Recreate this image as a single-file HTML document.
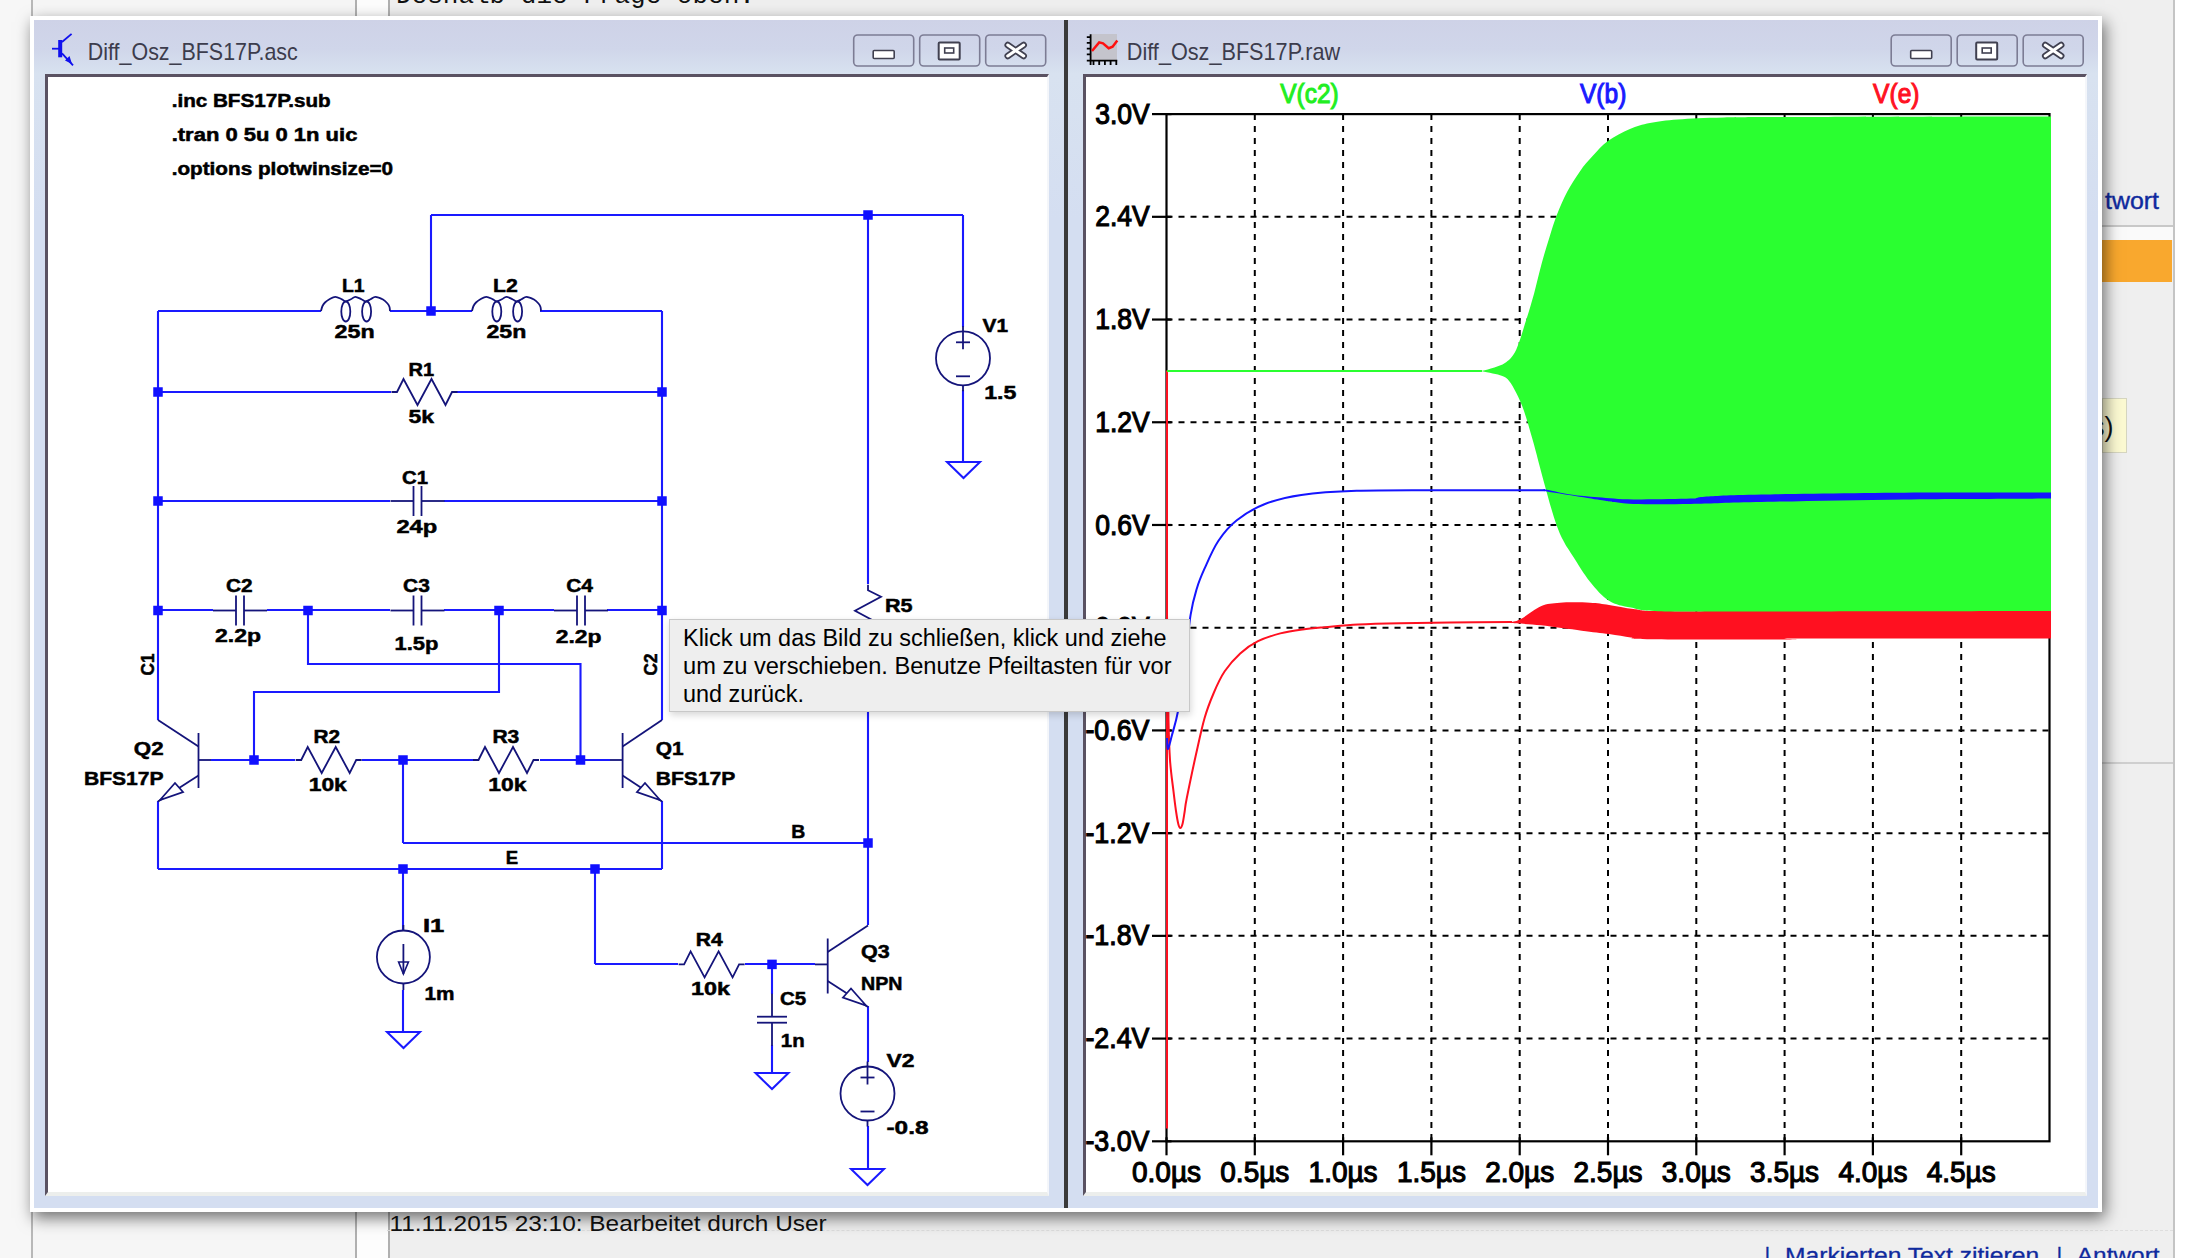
<!DOCTYPE html>
<html><head><meta charset="utf-8"><style>
html,body{margin:0;padding:0}
body{width:2202px;height:1258px;overflow:hidden;position:relative;background:#efefef;font-family:"Liberation Sans",sans-serif}
.a{position:absolute}
</style></head><body>
<div class="a" style="left:0;top:0;width:31px;height:1258px;background:#f7f7f7"></div>
<div class="a" style="left:31px;top:0;width:324px;height:1258px;background:#f6f6f6;border-left:2px solid #b8b8b8"></div>
<div class="a" style="left:355px;top:0;width:31px;height:1258px;background:#fdfdfd;border-left:2px solid #b0b0b0;border-right:2px solid #b0b0b0"></div>
<div class="a" style="left:2173px;top:0;width:29px;height:1258px;background:#ffffff;border-left:2px solid #c4c4c4"></div>
<div class="a" style="left:396px;top:-19px;font-family:'Liberation Mono',monospace;font-size:26px;color:#111;white-space:nowrap">Deshalb die Frage oben.</div>
<div class="a" style="left:2080px;top:225px;width:93px;height:13px;background:#fafafa;border-top:2px solid #c8c8c8"></div>
<div class="a" style="left:2080px;top:240px;width:92px;height:42px;background:#f9a82e"></div>
<div class="a" style="left:2102px;top:398px;width:23px;height:53px;background:#fcfad2;border:1px solid #d6d6c0"></div>
<div class="a" style="left:2102px;top:762px;width:71px;height:2px;background:#cfcfcf"></div>
<div class="a" style="left:387px;top:1230px;width:1786px;height:1px;border-top:1px dashed #dedede"></div>
<svg class="a" style="left:0;top:0" width="2202" height="1258" viewBox="0 0 2202 1258" font-family="Liberation Sans">
<text x="2105" y="209.3" font-size="23" fill="#0f2a9e" stroke="#0f2a9e" stroke-width="0.4" textLength="54" lengthAdjust="spacingAndGlyphs">twort</text>
<text x="2091" y="436" font-size="27" fill="#111">s)</text>
<text x="389.4" y="1230.6" font-size="21.5" fill="#111" textLength="437.3" lengthAdjust="spacingAndGlyphs">11.11.2015 23:10: Bearbeitet durch User</text>
<text x="1764.5" y="1263" font-size="22" fill="#0f2a9e" stroke="#0f2a9e" stroke-width="0.3">|</text>
<text x="1785.1" y="1263" font-size="22" fill="#0f2a9e" stroke="#0f2a9e" stroke-width="0.3" textLength="254" lengthAdjust="spacingAndGlyphs">Markierten Text zitieren</text>
<text x="2056.5" y="1263" font-size="22" fill="#0f2a9e" stroke="#0f2a9e" stroke-width="0.3">|</text>
<text x="2076.8" y="1263" font-size="22" fill="#0f2a9e" stroke="#0f2a9e" stroke-width="0.3" textLength="82.8" lengthAdjust="spacingAndGlyphs">Antwort</text>
</svg>
<!-- window -->
<div class="a" style="left:30px;top:16px;width:2072px;height:1196px;background:#fff;box-shadow:3px 6px 15px rgba(0,0,0,0.55)"></div>
<div class="a" style="left:34px;top:20px;width:2064px;height:1188px;background:linear-gradient(#ced2e7 0px,#d0d6ea 30px,#d8e2f0 54px,#d4def1 200px)"></div>
<div class="a" style="left:1064px;top:20px;width:4px;height:1188px;background:#3a3a3a"></div>
<div class="a" style="left:45px;top:74px;width:1004px;height:1122px;background:#fff;border-left:3px solid #5a5262;border-top:3px solid #5a5262;border-right:2px solid #f4f6fa;border-bottom:4px solid #eceeec;box-sizing:border-box"></div>
<div class="a" style="left:1083px;top:74px;width:1004px;height:1122px;background:#fff;border-left:3px solid #5a5262;border-top:3px solid #5a5262;border-right:2px solid #f4f6fa;border-bottom:4px solid #eceeec;box-sizing:border-box"></div>
<svg class="a" style="left:0;top:0" width="2202" height="1258" viewBox="0 0 2202 1258" font-family="Liberation Sans">
<text x="87.8" y="59.8" font-size="24" fill="#3c3c4c" textLength="210" lengthAdjust="spacingAndGlyphs">Diff_Osz_BFS17P.asc</text>
<text x="1126.8" y="59.6" font-size="24" fill="#3c3c4c" textLength="213.4" lengthAdjust="spacingAndGlyphs">Diff_Osz_BFS17P.raw</text>
<g id="buttons"><rect x="853.7" y="35" width="60" height="31" rx="4" fill="none" stroke="#7c7c94" stroke-width="1.6"/><rect x="919.7" y="35" width="60" height="31" rx="4" fill="none" stroke="#7c7c94" stroke-width="1.6"/><rect x="985.7" y="35" width="60" height="31" rx="4" fill="none" stroke="#7c7c94" stroke-width="1.6"/><rect x="873.2" y="50.5" width="21" height="8" fill="#fff" stroke="#404050" stroke-width="1.6" rx="1"/><rect x="938.7" y="42.5" width="21" height="17" fill="#fff" stroke="#404050" stroke-width="2" rx="1"/><rect x="944.7" y="48" width="9" height="5" fill="none" stroke="#404050" stroke-width="1.6"/><path d="M1007.7,45 L1023.7,56 M1023.7,45 L1007.7,56" stroke="#404050" stroke-width="6.5" stroke-linecap="round"/><path d="M1007.7,45 L1023.7,56 M1023.7,45 L1007.7,56" stroke="#fff" stroke-width="3" stroke-linecap="round"/><rect x="1891.2" y="35" width="60" height="31" rx="4" fill="none" stroke="#7c7c94" stroke-width="1.6"/><rect x="1957.2" y="35" width="60" height="31" rx="4" fill="none" stroke="#7c7c94" stroke-width="1.6"/><rect x="2023.2" y="35" width="60" height="31" rx="4" fill="none" stroke="#7c7c94" stroke-width="1.6"/><rect x="1910.7" y="50.5" width="21" height="8" fill="#fff" stroke="#404050" stroke-width="1.6" rx="1"/><rect x="1976.2" y="42.5" width="21" height="17" fill="#fff" stroke="#404050" stroke-width="2" rx="1"/><rect x="1982.2" y="48" width="9" height="5" fill="none" stroke="#404050" stroke-width="1.6"/><path d="M2045.1999999999998,45 L2061.2,56 M2061.2,45 L2045.1999999999998,56" stroke="#404050" stroke-width="6.5" stroke-linecap="round"/><path d="M2045.1999999999998,45 L2061.2,56 M2061.2,45 L2045.1999999999998,56" stroke="#fff" stroke-width="3" stroke-linecap="round"/><line x1="52" y1="48.7" x2="59" y2="48.7" stroke="#1010ee" stroke-width="1.8"/><rect x="58.2" y="40" width="4" height="17.3" fill="#1010ee"/><line x1="62" y1="42" x2="71.6" y2="33.9" stroke="#1010ee" stroke-width="1.8"/><line x1="62" y1="53.4" x2="73" y2="65.4" stroke="#1010ee" stroke-width="1.8"/><polygon points="72,64 65,60.5 69.5,56" fill="#1010ee"/><rect x="1091" y="34" width="26" height="26" fill="#c4c4cc"/><path d="M1090.6,34.3 L1090.6,64.9 M1086.8,60.6 L1117.3,60.6 M1086.8,37.2 L1090.6,37.2 M1086.8,42.9 L1090.6,42.9 M1086.8,48.6 L1090.6,48.6 M1086.8,54.4 L1090.6,54.4 M1093.5,60.6 L1093.5,64.9 M1099.2,60.6 L1099.2,64.9 M1104.9,60.6 L1104.9,64.9 M1110.6,60.6 L1110.6,64.9 M1116.3,60.6 L1116.3,64.9" stroke="#000" stroke-width="1.8" fill="none"/><path d="M1092,51 L1099.2,42.4 L1103,43.4 L1108.7,48.2 L1112.6,46.7 L1117.3,40.5" stroke="#ff1010" stroke-width="2.5" fill="none"/></g>
<g id="schem"><line x1="431" y1="215" x2="963" y2="215" stroke="#1a1aff" stroke-width="2.1" /><line x1="431" y1="215" x2="431" y2="311" stroke="#1a1aff" stroke-width="2.1" /><line x1="158" y1="311" x2="321" y2="311" stroke="#1a1aff" stroke-width="2.1" /><line x1="390" y1="311" x2="472" y2="311" stroke="#1a1aff" stroke-width="2.1" /><line x1="540" y1="311" x2="662" y2="311" stroke="#1a1aff" stroke-width="2.1" /><line x1="158" y1="311" x2="158" y2="720" stroke="#1a1aff" stroke-width="2.1" /><line x1="662" y1="311" x2="662" y2="720" stroke="#1a1aff" stroke-width="2.1" /><line x1="158" y1="392" x2="391" y2="392" stroke="#1a1aff" stroke-width="2.1" /><line x1="457" y1="392" x2="662" y2="392" stroke="#1a1aff" stroke-width="2.1" /><line x1="158" y1="501" x2="390" y2="501" stroke="#1a1aff" stroke-width="2.1" /><line x1="444" y1="501" x2="662" y2="501" stroke="#1a1aff" stroke-width="2.1" /><line x1="158" y1="610" x2="213" y2="610" stroke="#1a1aff" stroke-width="2.1" /><line x1="267" y1="610" x2="390" y2="610" stroke="#1a1aff" stroke-width="2.1" /><line x1="444" y1="610" x2="554" y2="610" stroke="#1a1aff" stroke-width="2.1" /><line x1="607" y1="610" x2="662" y2="610" stroke="#1a1aff" stroke-width="2.1" /><line x1="211" y1="760" x2="295" y2="760" stroke="#1a1aff" stroke-width="2.1" /><line x1="362" y1="760" x2="473" y2="760" stroke="#1a1aff" stroke-width="2.1" /><line x1="540" y1="760" x2="610" y2="760" stroke="#1a1aff" stroke-width="2.1" /><line x1="158" y1="801" x2="158" y2="869" stroke="#1a1aff" stroke-width="2.1" /><line x1="158" y1="869" x2="662" y2="869" stroke="#1a1aff" stroke-width="2.1" /><line x1="662" y1="801" x2="662" y2="869" stroke="#1a1aff" stroke-width="2.1" /><line x1="403" y1="760" x2="403" y2="843" stroke="#1a1aff" stroke-width="2.1" /><line x1="403" y1="843" x2="868" y2="843" stroke="#1a1aff" stroke-width="2.1" /><line x1="403" y1="869" x2="403" y2="930" stroke="#1a1aff" stroke-width="2.1" /><line x1="403" y1="990" x2="403" y2="1032" stroke="#1a1aff" stroke-width="2.1" /><line x1="595" y1="869" x2="595" y2="964" stroke="#1a1aff" stroke-width="2.1" /><line x1="595" y1="964" x2="678" y2="964" stroke="#1a1aff" stroke-width="2.1" /><line x1="745" y1="964" x2="815" y2="964" stroke="#1a1aff" stroke-width="2.1" /><line x1="772" y1="964" x2="772" y2="994" stroke="#1a1aff" stroke-width="2.1" /><line x1="772" y1="1045" x2="772" y2="1073" stroke="#1a1aff" stroke-width="2.1" /><line x1="868" y1="215" x2="868" y2="584" stroke="#1a1aff" stroke-width="2.1" /><line x1="868" y1="651" x2="868" y2="925" stroke="#1a1aff" stroke-width="2.1" /><line x1="868" y1="1006" x2="868" y2="1062" stroke="#1a1aff" stroke-width="2.1" /><line x1="868" y1="1126" x2="868" y2="1169" stroke="#1a1aff" stroke-width="2.1" /><line x1="963" y1="215" x2="963" y2="327" stroke="#1a1aff" stroke-width="2.1" /><line x1="963" y1="390" x2="963" y2="462" stroke="#1a1aff" stroke-width="2.1" /><polyline points="308.0,610.0 308.0,664.0 580.5,664.0 580.5,760.0" stroke="#1a1aff" stroke-width="2.1" fill="none" stroke-linejoin="miter"/><polyline points="499.0,610.0 499.0,692.0 254.0,692.0 254.0,760.0" stroke="#1a1aff" stroke-width="2.1" fill="none" stroke-linejoin="miter"/><path d="M321.0,311.0 C321.2,310.2 321.8,307.4 322.5,306.0 C323.2,304.6 323.9,303.6 325.0,302.5 C326.1,301.4 327.3,300.4 329.0,299.5 C330.7,298.6 333.2,296.8 335.3,296.8 C337.4,296.8 340.2,298.6 341.9,299.3 C343.6,300.1 344.1,301.3 345.6,301.3 C347.1,301.3 349.3,300.1 350.9,299.3 C352.5,298.6 353.6,296.8 355.4,296.8 C357.2,296.8 359.8,298.6 361.5,299.3 C363.2,300.1 364.1,301.3 365.6,301.3 C367.1,301.3 368.9,300.1 370.5,299.3 C372.1,298.6 373.3,296.8 375.4,296.8 C377.5,296.8 381.0,298.4 383.0,299.5 C385.0,300.6 386.4,302.2 387.5,303.5 C388.6,304.8 389.1,305.8 389.5,307.0 C389.9,308.2 389.9,310.3 390.0,311.0 " stroke="#14147a" stroke-width="1.8" fill="none"/><ellipse cx="345.8" cy="311.5" rx="4.5" ry="10" stroke="#14147a" stroke-width="1.8" fill="none"/><ellipse cx="366.6" cy="311.5" rx="4.5" ry="10" stroke="#14147a" stroke-width="1.8" fill="none"/><path d="M472.0,311.0 C472.2,310.2 472.8,307.4 473.5,306.0 C474.2,304.6 474.9,303.6 476.0,302.5 C477.1,301.4 478.3,300.4 480.0,299.5 C481.7,298.6 484.2,296.8 486.3,296.8 C488.4,296.8 491.2,298.6 492.9,299.3 C494.6,300.1 495.1,301.3 496.6,301.3 C498.1,301.3 500.3,300.1 501.9,299.3 C503.5,298.6 504.6,296.8 506.4,296.8 C508.2,296.8 510.8,298.6 512.5,299.3 C514.2,300.1 515.1,301.3 516.6,301.3 C518.1,301.3 519.9,300.1 521.5,299.3 C523.1,298.6 524.3,296.8 526.4,296.8 C528.5,296.8 532.0,298.4 534.0,299.5 C536.0,300.6 537.4,302.2 538.5,303.5 C539.6,304.8 540.1,305.8 540.5,307.0 C540.9,308.2 540.9,310.3 541.0,311.0 " stroke="#14147a" stroke-width="1.8" fill="none"/><ellipse cx="496.8" cy="311.5" rx="4.5" ry="10" stroke="#14147a" stroke-width="1.8" fill="none"/><ellipse cx="517.6" cy="311.5" rx="4.5" ry="10" stroke="#14147a" stroke-width="1.8" fill="none"/><polyline points="391.5,392.0 397.0,392.0 403.5,379.0 417.5,405.0 431.5,379.0 445.5,405.0 452.0,392.0 457.5,392.0" stroke="#14147a" stroke-width="1.8" fill="none" stroke-linejoin="miter"/><polyline points="295.7,760.0 301.2,760.0 307.7,747.0 321.7,773.0 335.7,747.0 349.7,773.0 356.2,760.0 361.7,760.0" stroke="#14147a" stroke-width="1.8" fill="none" stroke-linejoin="miter"/><polyline points="473.0,760.0 478.5,760.0 485.0,747.0 499.0,773.0 513.0,747.0 527.0,773.0 533.5,760.0 539.0,760.0" stroke="#14147a" stroke-width="1.8" fill="none" stroke-linejoin="miter"/><polyline points="678.6,964.4 684.1,964.4 690.6,951.4 704.6,977.4 718.6,951.4 732.6,977.4 739.1,964.4 744.6,964.4" stroke="#14147a" stroke-width="1.8" fill="none" stroke-linejoin="miter"/><polyline points="868.0,584.8 868.0,590.3 881.0,596.8 855.0,610.8 881.0,624.8 855.0,638.8 868.0,645.3 868.0,650.8" stroke="#14147a" stroke-width="1.8" fill="none" stroke-linejoin="miter"/><line x1="390.5" y1="501" x2="413.5" y2="501" stroke="#14147a" stroke-width="1.8" /><line x1="421.5" y1="501" x2="444.5" y2="501" stroke="#14147a" stroke-width="1.8" /><line x1="413.5" y1="486" x2="413.5" y2="516" stroke="#14147a" stroke-width="1.8" /><line x1="421.5" y1="486" x2="421.5" y2="516" stroke="#14147a" stroke-width="1.8" /><line x1="213" y1="610.5" x2="236" y2="610.5" stroke="#14147a" stroke-width="1.8" /><line x1="244" y1="610.5" x2="267" y2="610.5" stroke="#14147a" stroke-width="1.8" /><line x1="236" y1="595.5" x2="236" y2="625.5" stroke="#14147a" stroke-width="1.8" /><line x1="244" y1="595.5" x2="244" y2="625.5" stroke="#14147a" stroke-width="1.8" /><line x1="390.5" y1="610.5" x2="413.5" y2="610.5" stroke="#14147a" stroke-width="1.8" /><line x1="421.5" y1="610.5" x2="444.5" y2="610.5" stroke="#14147a" stroke-width="1.8" /><line x1="413.5" y1="595.5" x2="413.5" y2="625.5" stroke="#14147a" stroke-width="1.8" /><line x1="421.5" y1="595.5" x2="421.5" y2="625.5" stroke="#14147a" stroke-width="1.8" /><line x1="554" y1="610.5" x2="577" y2="610.5" stroke="#14147a" stroke-width="1.8" /><line x1="585" y1="610.5" x2="608" y2="610.5" stroke="#14147a" stroke-width="1.8" /><line x1="577" y1="595.5" x2="577" y2="625.5" stroke="#14147a" stroke-width="1.8" /><line x1="585" y1="595.5" x2="585" y2="625.5" stroke="#14147a" stroke-width="1.8" /><line x1="772" y1="993.7" x2="772" y2="1016.7" stroke="#14147a" stroke-width="1.8" /><line x1="772" y1="1022.7" x2="772" y2="1045.7" stroke="#14147a" stroke-width="1.8" /><line x1="757" y1="1016.7" x2="787" y2="1016.7" stroke="#14147a" stroke-width="1.8" /><line x1="757" y1="1022.7" x2="787" y2="1022.7" stroke="#14147a" stroke-width="1.8" /><line x1="198.5" y1="733" x2="198.5" y2="788" stroke="#14147a" stroke-width="1.8" /><line x1="158" y1="720" x2="198.5" y2="746.5" stroke="#14147a" stroke-width="1.8" /><line x1="198.5" y1="775.5" x2="158" y2="801.5" stroke="#14147a" stroke-width="1.8" /><polygon points="160.0,800.0 175.0,783.0 183.0,792.0" stroke="#14147a" stroke-width="1.8" fill="#fff" stroke-linejoin="miter"/><line x1="622.6" y1="733" x2="622.6" y2="788" stroke="#14147a" stroke-width="1.8" /><line x1="662" y1="720" x2="622.6" y2="746.5" stroke="#14147a" stroke-width="1.8" /><line x1="622.6" y1="775.5" x2="662" y2="801.5" stroke="#14147a" stroke-width="1.8" /><polygon points="660.0,800.0 645.0,783.0 637.0,792.0" stroke="#14147a" stroke-width="1.8" fill="#fff" stroke-linejoin="miter"/><line x1="827.7" y1="938.5" x2="827.7" y2="993.5" stroke="#14147a" stroke-width="1.8" /><line x1="868" y1="925.5" x2="827.7" y2="952.0" stroke="#14147a" stroke-width="1.8" /><line x1="827.7" y1="981.0" x2="868" y2="1007.0" stroke="#14147a" stroke-width="1.8" /><polygon points="866.0,1005.5 851.0,988.5 843.0,997.5" stroke="#14147a" stroke-width="1.8" fill="#fff" stroke-linejoin="miter"/><line x1="198.5" y1="760" x2="211" y2="760" stroke="#14147a" stroke-width="1.8" /><line x1="610" y1="760" x2="622.6" y2="760" stroke="#14147a" stroke-width="1.8" /><line x1="815" y1="964.4" x2="827.7" y2="964.4" stroke="#14147a" stroke-width="1.8" /><circle cx="403.4" cy="957" r="26.5" stroke="#14147a" stroke-width="1.8" fill="none"/><line x1="403.4" y1="944" x2="403.4" y2="974" stroke="#14147a" stroke-width="1.8" /><polygon points="398.6,962.0 408.4,962.0 403.4,974.0" stroke="#14147a" stroke-width="1.6" fill="none" stroke-linejoin="miter"/><line x1="403.4" y1="983.5" x2="403.4" y2="990" stroke="#14147a" stroke-width="1.8" /><line x1="403.4" y1="925" x2="403.4" y2="930.5" stroke="#14147a" stroke-width="1.8" /><circle cx="963" cy="358.3" r="27" stroke="#14147a" stroke-width="1.8" fill="none"/><line x1="956" y1="342.3" x2="970" y2="342.3" stroke="#14147a" stroke-width="1.8" /><line x1="963" y1="326.3" x2="963" y2="349.3" stroke="#14147a" stroke-width="1.8" /><line x1="956" y1="376.3" x2="970" y2="376.3" stroke="#14147a" stroke-width="1.8" /><line x1="963" y1="385.3" x2="963" y2="391.3" stroke="#14147a" stroke-width="1.8" /><circle cx="867.5" cy="1093.5" r="27" stroke="#14147a" stroke-width="1.8" fill="none"/><line x1="860.5" y1="1077.5" x2="874.5" y2="1077.5" stroke="#14147a" stroke-width="1.8" /><line x1="867.5" y1="1061.5" x2="867.5" y2="1084.5" stroke="#14147a" stroke-width="1.8" /><line x1="860.5" y1="1111.5" x2="874.5" y2="1111.5" stroke="#14147a" stroke-width="1.8" /><line x1="867.5" y1="1120.5" x2="867.5" y2="1126.5" stroke="#14147a" stroke-width="1.8" /><polygon points="387.0,1032.0 420.0,1032.0 403.5,1048.0" stroke="#1a1aff" stroke-width="2" fill="none" stroke-linejoin="miter"/><polygon points="947.0,462.0 980.0,462.0 963.5,478.0" stroke="#1a1aff" stroke-width="2" fill="none" stroke-linejoin="miter"/><polygon points="755.5,1073.0 788.5,1073.0 772.0,1089.0" stroke="#1a1aff" stroke-width="2" fill="none" stroke-linejoin="miter"/><polygon points="851.0,1169.0 884.0,1169.0 867.5,1185.0" stroke="#1a1aff" stroke-width="2" fill="none" stroke-linejoin="miter"/><rect x="426.25" y="306.25" width="9.5" height="9.5" fill="#1010ff"/><rect x="863.25" y="210.25" width="9.5" height="9.5" fill="#1010ff"/><rect x="153.25" y="387.25" width="9.5" height="9.5" fill="#1010ff"/><rect x="657.25" y="387.25" width="9.5" height="9.5" fill="#1010ff"/><rect x="153.25" y="496.25" width="9.5" height="9.5" fill="#1010ff"/><rect x="657.25" y="496.25" width="9.5" height="9.5" fill="#1010ff"/><rect x="153.25" y="605.75" width="9.5" height="9.5" fill="#1010ff"/><rect x="303.25" y="605.75" width="9.5" height="9.5" fill="#1010ff"/><rect x="494.25" y="605.75" width="9.5" height="9.5" fill="#1010ff"/><rect x="657.25" y="605.75" width="9.5" height="9.5" fill="#1010ff"/><rect x="249.25" y="755.25" width="9.5" height="9.5" fill="#1010ff"/><rect x="398.25" y="755.25" width="9.5" height="9.5" fill="#1010ff"/><rect x="575.75" y="755.25" width="9.5" height="9.5" fill="#1010ff"/><rect x="863.25" y="838.25" width="9.5" height="9.5" fill="#1010ff"/><rect x="398.25" y="864.25" width="9.5" height="9.5" fill="#1010ff"/><rect x="590.25" y="864.25" width="9.5" height="9.5" fill="#1010ff"/><rect x="767.25" y="959.65" width="9.5" height="9.5" fill="#1010ff"/><text x="342" y="292.4" font-family="Liberation Sans" font-weight="bold" font-size="19" fill="#000" stroke="#000" stroke-width="0.5" textLength="22.69999999999999" lengthAdjust="spacingAndGlyphs">L1</text><text x="493" y="292.4" font-family="Liberation Sans" font-weight="bold" font-size="19" fill="#000" stroke="#000" stroke-width="0.5" textLength="24.799999999999955" lengthAdjust="spacingAndGlyphs">L2</text><text x="334.5" y="337.7" font-family="Liberation Sans" font-weight="bold" font-size="19" fill="#000" stroke="#000" stroke-width="0.5" textLength="40.10000000000002" lengthAdjust="spacingAndGlyphs">25n</text><text x="486.4" y="337.7" font-family="Liberation Sans" font-weight="bold" font-size="19" fill="#000" stroke="#000" stroke-width="0.5" textLength="39.89999999999998" lengthAdjust="spacingAndGlyphs">25n</text><text x="408.5" y="375.7" font-family="Liberation Sans" font-weight="bold" font-size="19" fill="#000" stroke="#000" stroke-width="0.5" textLength="25.600000000000023" lengthAdjust="spacingAndGlyphs">R1</text><text x="408.5" y="423.1" font-family="Liberation Sans" font-weight="bold" font-size="19" fill="#000" stroke="#000" stroke-width="0.5" textLength="25.600000000000023" lengthAdjust="spacingAndGlyphs">5k</text><text x="402" y="483.5" font-family="Liberation Sans" font-weight="bold" font-size="19" fill="#000" stroke="#000" stroke-width="0.5" textLength="26" lengthAdjust="spacingAndGlyphs">C1</text><text x="396.4" y="532.8" font-family="Liberation Sans" font-weight="bold" font-size="19" fill="#000" stroke="#000" stroke-width="0.5" textLength="40.80000000000001" lengthAdjust="spacingAndGlyphs">24p</text><text x="226" y="591.5" font-family="Liberation Sans" font-weight="bold" font-size="19" fill="#000" stroke="#000" stroke-width="0.5" textLength="26.599999999999994" lengthAdjust="spacingAndGlyphs">C2</text><text x="215" y="641.5" font-family="Liberation Sans" font-weight="bold" font-size="19" fill="#000" stroke="#000" stroke-width="0.5" textLength="46" lengthAdjust="spacingAndGlyphs">2.2p</text><text x="403" y="591.5" font-family="Liberation Sans" font-weight="bold" font-size="19" fill="#000" stroke="#000" stroke-width="0.5" textLength="26.80000000000001" lengthAdjust="spacingAndGlyphs">C3</text><text x="394.5" y="649.5" font-family="Liberation Sans" font-weight="bold" font-size="19" fill="#000" stroke="#000" stroke-width="0.5" textLength="43.89999999999998" lengthAdjust="spacingAndGlyphs">1.5p</text><text x="566.2" y="591.5" font-family="Liberation Sans" font-weight="bold" font-size="19" fill="#000" stroke="#000" stroke-width="0.5" textLength="26.799999999999955" lengthAdjust="spacingAndGlyphs">C4</text><text x="555.7" y="642.5" font-family="Liberation Sans" font-weight="bold" font-size="19" fill="#000" stroke="#000" stroke-width="0.5" textLength="45.799999999999955" lengthAdjust="spacingAndGlyphs">2.2p</text><text x="313.4" y="743" font-family="Liberation Sans" font-weight="bold" font-size="19" fill="#000" stroke="#000" stroke-width="0.5" textLength="26.600000000000023" lengthAdjust="spacingAndGlyphs">R2</text><text x="308.7" y="790.8" font-family="Liberation Sans" font-weight="bold" font-size="19" fill="#000" stroke="#000" stroke-width="0.5" textLength="38.10000000000002" lengthAdjust="spacingAndGlyphs">10k</text><text x="492.4" y="742.5" font-family="Liberation Sans" font-weight="bold" font-size="19" fill="#000" stroke="#000" stroke-width="0.5" textLength="26.899999999999977" lengthAdjust="spacingAndGlyphs">R3</text><text x="488.3" y="790.9" font-family="Liberation Sans" font-weight="bold" font-size="19" fill="#000" stroke="#000" stroke-width="0.5" textLength="38.19999999999999" lengthAdjust="spacingAndGlyphs">10k</text><text x="133.8" y="755" font-family="Liberation Sans" font-weight="bold" font-size="19" fill="#000" stroke="#000" stroke-width="0.5" textLength="29.799999999999983" lengthAdjust="spacingAndGlyphs">Q2</text><text x="84" y="785" font-family="Liberation Sans" font-weight="bold" font-size="19" fill="#000" stroke="#000" stroke-width="0.5" textLength="79.6" lengthAdjust="spacingAndGlyphs">BFS17P</text><text x="655.7" y="755" font-family="Liberation Sans" font-weight="bold" font-size="19" fill="#000" stroke="#000" stroke-width="0.5" textLength="27.899999999999977" lengthAdjust="spacingAndGlyphs">Q1</text><text x="655.7" y="785" font-family="Liberation Sans" font-weight="bold" font-size="19" fill="#000" stroke="#000" stroke-width="0.5" textLength="79.5" lengthAdjust="spacingAndGlyphs">BFS17P</text><text x="505.8" y="864.2" font-family="Liberation Sans" font-weight="bold" font-size="19" fill="#000" stroke="#000" stroke-width="0.5" textLength="12.400000000000034" lengthAdjust="spacingAndGlyphs">E</text><text x="791.3" y="838" font-family="Liberation Sans" font-weight="bold" font-size="19" fill="#000" stroke="#000" stroke-width="0.5" textLength="14.0" lengthAdjust="spacingAndGlyphs">B</text><text x="423" y="932.2" font-family="Liberation Sans" font-weight="bold" font-size="19" fill="#000" stroke="#000" stroke-width="0.5" textLength="21.399999999999977" lengthAdjust="spacingAndGlyphs">I1</text><text x="424.4" y="999.5" font-family="Liberation Sans" font-weight="bold" font-size="19" fill="#000" stroke="#000" stroke-width="0.5" textLength="30.0" lengthAdjust="spacingAndGlyphs">1m</text><text x="695.8" y="945.5" font-family="Liberation Sans" font-weight="bold" font-size="19" fill="#000" stroke="#000" stroke-width="0.5" textLength="27.0" lengthAdjust="spacingAndGlyphs">R4</text><text x="691" y="995.4" font-family="Liberation Sans" font-weight="bold" font-size="19" fill="#000" stroke="#000" stroke-width="0.5" textLength="39" lengthAdjust="spacingAndGlyphs">10k</text><text x="861" y="957.5" font-family="Liberation Sans" font-weight="bold" font-size="19" fill="#000" stroke="#000" stroke-width="0.5" textLength="28.700000000000045" lengthAdjust="spacingAndGlyphs">Q3</text><text x="861" y="989.5" font-family="Liberation Sans" font-weight="bold" font-size="19" fill="#000" stroke="#000" stroke-width="0.5" textLength="41.5" lengthAdjust="spacingAndGlyphs">NPN</text><text x="780" y="1005.3" font-family="Liberation Sans" font-weight="bold" font-size="19" fill="#000" stroke="#000" stroke-width="0.5" textLength="26.299999999999955" lengthAdjust="spacingAndGlyphs">C5</text><text x="780.8" y="1047" font-family="Liberation Sans" font-weight="bold" font-size="19" fill="#000" stroke="#000" stroke-width="0.5" textLength="23.90000000000009" lengthAdjust="spacingAndGlyphs">1n</text><text x="886.5" y="1066.7" font-family="Liberation Sans" font-weight="bold" font-size="19" fill="#000" stroke="#000" stroke-width="0.5" textLength="28.0" lengthAdjust="spacingAndGlyphs">V2</text><text x="886.5" y="1134.3" font-family="Liberation Sans" font-weight="bold" font-size="19" fill="#000" stroke="#000" stroke-width="0.5" textLength="42.0" lengthAdjust="spacingAndGlyphs">-0.8</text><text x="982.5" y="331.8" font-family="Liberation Sans" font-weight="bold" font-size="19" fill="#000" stroke="#000" stroke-width="0.5" textLength="25.5" lengthAdjust="spacingAndGlyphs">V1</text><text x="984.2" y="399.3" font-family="Liberation Sans" font-weight="bold" font-size="19" fill="#000" stroke="#000" stroke-width="0.5" textLength="32.19999999999993" lengthAdjust="spacingAndGlyphs">1.5</text><text x="884.9" y="611.8" font-family="Liberation Sans" font-weight="bold" font-size="19" fill="#000" stroke="#000" stroke-width="0.5" textLength="27.600000000000023" lengthAdjust="spacingAndGlyphs">R5</text><text transform="translate(153.5,675.4) rotate(-90)" x="0" y="0" font-family="Liberation Sans" font-weight="bold" font-size="19" stroke="#000" stroke-width="0.5" textLength="22" lengthAdjust="spacingAndGlyphs">C1</text><text transform="translate(657.4,675.4) rotate(-90)" x="0" y="0" font-family="Liberation Sans" font-weight="bold" font-size="19" stroke="#000" stroke-width="0.5" textLength="22" lengthAdjust="spacingAndGlyphs">C2</text><text x="171.7" y="106.8" font-family="Liberation Sans" font-weight="bold" font-size="18" fill="#000" stroke="#000" stroke-width="0.5" textLength="159.0" lengthAdjust="spacingAndGlyphs">.inc BFS17P.sub</text><text x="171.7" y="141.2" font-family="Liberation Sans" font-weight="bold" font-size="18" fill="#000" stroke="#000" stroke-width="0.5" textLength="185.7" lengthAdjust="spacingAndGlyphs">.tran 0 5u 0 1n uic</text><text x="171.7" y="175.2" font-family="Liberation Sans" font-weight="bold" font-size="18" fill="#000" stroke="#000" stroke-width="0.5" textLength="221.3" lengthAdjust="spacingAndGlyphs">.options plotwinsize=0</text></g>
<g id="chart"><line x1="1254.8" y1="114.1" x2="1254.8" y2="1141.3" stroke="#000" stroke-width="2" stroke-dasharray="6 6"/><line x1="1343.1" y1="114.1" x2="1343.1" y2="1141.3" stroke="#000" stroke-width="2" stroke-dasharray="6 6"/><line x1="1431.4" y1="114.1" x2="1431.4" y2="1141.3" stroke="#000" stroke-width="2" stroke-dasharray="6 6"/><line x1="1519.7" y1="114.1" x2="1519.7" y2="1141.3" stroke="#000" stroke-width="2" stroke-dasharray="6 6"/><line x1="1608.0" y1="114.1" x2="1608.0" y2="1141.3" stroke="#000" stroke-width="2" stroke-dasharray="6 6"/><line x1="1696.3" y1="114.1" x2="1696.3" y2="1141.3" stroke="#000" stroke-width="2" stroke-dasharray="6 6"/><line x1="1784.6" y1="114.1" x2="1784.6" y2="1141.3" stroke="#000" stroke-width="2" stroke-dasharray="6 6"/><line x1="1872.9" y1="114.1" x2="1872.9" y2="1141.3" stroke="#000" stroke-width="2" stroke-dasharray="6 6"/><line x1="1961.2" y1="114.1" x2="1961.2" y2="1141.3" stroke="#000" stroke-width="2" stroke-dasharray="6 6"/><line x1="1166.5" y1="216.82" x2="2049.5" y2="216.82" stroke="#000" stroke-width="2" stroke-dasharray="6 6"/><line x1="1166.5" y1="319.53999999999996" x2="2049.5" y2="319.53999999999996" stroke="#000" stroke-width="2" stroke-dasharray="6 6"/><line x1="1166.5" y1="422.26" x2="2049.5" y2="422.26" stroke="#000" stroke-width="2" stroke-dasharray="6 6"/><line x1="1166.5" y1="524.98" x2="2049.5" y2="524.98" stroke="#000" stroke-width="2" stroke-dasharray="6 6"/><line x1="1166.5" y1="627.7" x2="2049.5" y2="627.7" stroke="#000" stroke-width="2" stroke-dasharray="6 6"/><line x1="1166.5" y1="730.4200000000001" x2="2049.5" y2="730.4200000000001" stroke="#000" stroke-width="2" stroke-dasharray="6 6"/><line x1="1166.5" y1="833.1400000000001" x2="2049.5" y2="833.1400000000001" stroke="#000" stroke-width="2" stroke-dasharray="6 6"/><line x1="1166.5" y1="935.86" x2="2049.5" y2="935.86" stroke="#000" stroke-width="2" stroke-dasharray="6 6"/><line x1="1166.5" y1="1038.5800000000002" x2="2049.5" y2="1038.5800000000002" stroke="#000" stroke-width="2" stroke-dasharray="6 6"/><rect x="1166.5" y="114.1" width="883.0" height="1027.2" fill="none" stroke="#000" stroke-width="2.2"/><line x1="1152" y1="114.1" x2="1171.5" y2="114.1" stroke="#000" stroke-width="2.2" /><line x1="1152" y1="216.82" x2="1171.5" y2="216.82" stroke="#000" stroke-width="2.2" /><line x1="1152" y1="319.53999999999996" x2="1171.5" y2="319.53999999999996" stroke="#000" stroke-width="2.2" /><line x1="1152" y1="422.26" x2="1171.5" y2="422.26" stroke="#000" stroke-width="2.2" /><line x1="1152" y1="524.98" x2="1171.5" y2="524.98" stroke="#000" stroke-width="2.2" /><line x1="1152" y1="627.7" x2="1171.5" y2="627.7" stroke="#000" stroke-width="2.2" /><line x1="1152" y1="730.4200000000001" x2="1171.5" y2="730.4200000000001" stroke="#000" stroke-width="2.2" /><line x1="1152" y1="833.1400000000001" x2="1171.5" y2="833.1400000000001" stroke="#000" stroke-width="2.2" /><line x1="1152" y1="935.86" x2="1171.5" y2="935.86" stroke="#000" stroke-width="2.2" /><line x1="1152" y1="1038.5800000000002" x2="1171.5" y2="1038.5800000000002" stroke="#000" stroke-width="2.2" /><line x1="1152" y1="1141.3" x2="1171.5" y2="1141.3" stroke="#000" stroke-width="2.2" /><line x1="1166.5" y1="1137.3" x2="1166.5" y2="1155.3" stroke="#000" stroke-width="2.2" /><line x1="1254.8" y1="1137.3" x2="1254.8" y2="1155.3" stroke="#000" stroke-width="2.2" /><line x1="1343.1" y1="1137.3" x2="1343.1" y2="1155.3" stroke="#000" stroke-width="2.2" /><line x1="1431.4" y1="1137.3" x2="1431.4" y2="1155.3" stroke="#000" stroke-width="2.2" /><line x1="1519.7" y1="1137.3" x2="1519.7" y2="1155.3" stroke="#000" stroke-width="2.2" /><line x1="1608.0" y1="1137.3" x2="1608.0" y2="1155.3" stroke="#000" stroke-width="2.2" /><line x1="1696.3" y1="1137.3" x2="1696.3" y2="1155.3" stroke="#000" stroke-width="2.2" /><line x1="1784.6" y1="1137.3" x2="1784.6" y2="1155.3" stroke="#000" stroke-width="2.2" /><line x1="1872.9" y1="1137.3" x2="1872.9" y2="1155.3" stroke="#000" stroke-width="2.2" /><line x1="1961.2" y1="1137.3" x2="1961.2" y2="1155.3" stroke="#000" stroke-width="2.2" /><text x="1095.3" y="123.6" font-size="29" stroke="#000" stroke-width="1.15" textLength="54.4" lengthAdjust="spacingAndGlyphs">3.0V</text><text x="1095.3" y="226.3" font-size="29" stroke="#000" stroke-width="1.15" textLength="54.4" lengthAdjust="spacingAndGlyphs">2.4V</text><text x="1095.3" y="329.0" font-size="29" stroke="#000" stroke-width="1.15" textLength="54.4" lengthAdjust="spacingAndGlyphs">1.8V</text><text x="1095.3" y="431.8" font-size="29" stroke="#000" stroke-width="1.15" textLength="54.4" lengthAdjust="spacingAndGlyphs">1.2V</text><text x="1095.3" y="534.5" font-size="29" stroke="#000" stroke-width="1.15" textLength="54.4" lengthAdjust="spacingAndGlyphs">0.6V</text><text x="1095.3" y="637.2" font-size="29" stroke="#000" stroke-width="1.15" textLength="54.4" lengthAdjust="spacingAndGlyphs">0.0V</text><text x="1085.4" y="739.9" font-size="29" stroke="#000" stroke-width="1.15" textLength="64" lengthAdjust="spacingAndGlyphs">-0.6V</text><text x="1085.4" y="842.6" font-size="29" stroke="#000" stroke-width="1.15" textLength="64" lengthAdjust="spacingAndGlyphs">-1.2V</text><text x="1085.4" y="945.4" font-size="29" stroke="#000" stroke-width="1.15" textLength="64" lengthAdjust="spacingAndGlyphs">-1.8V</text><text x="1085.4" y="1048.1" font-size="29" stroke="#000" stroke-width="1.15" textLength="64" lengthAdjust="spacingAndGlyphs">-2.4V</text><text x="1085.4" y="1150.8" font-size="29" stroke="#000" stroke-width="1.15" textLength="64" lengthAdjust="spacingAndGlyphs">-3.0V</text><text x="1132.0" y="1181.5" font-size="29" stroke="#000" stroke-width="1.15" textLength="69" lengthAdjust="spacingAndGlyphs">0.0µs</text><text x="1220.3" y="1181.5" font-size="29" stroke="#000" stroke-width="1.15" textLength="69" lengthAdjust="spacingAndGlyphs">0.5µs</text><text x="1308.6" y="1181.5" font-size="29" stroke="#000" stroke-width="1.15" textLength="69" lengthAdjust="spacingAndGlyphs">1.0µs</text><text x="1396.9" y="1181.5" font-size="29" stroke="#000" stroke-width="1.15" textLength="69" lengthAdjust="spacingAndGlyphs">1.5µs</text><text x="1485.2" y="1181.5" font-size="29" stroke="#000" stroke-width="1.15" textLength="69" lengthAdjust="spacingAndGlyphs">2.0µs</text><text x="1573.5" y="1181.5" font-size="29" stroke="#000" stroke-width="1.15" textLength="69" lengthAdjust="spacingAndGlyphs">2.5µs</text><text x="1661.8" y="1181.5" font-size="29" stroke="#000" stroke-width="1.15" textLength="69" lengthAdjust="spacingAndGlyphs">3.0µs</text><text x="1750.1" y="1181.5" font-size="29" stroke="#000" stroke-width="1.15" textLength="69" lengthAdjust="spacingAndGlyphs">3.5µs</text><text x="1838.4" y="1181.5" font-size="29" stroke="#000" stroke-width="1.15" textLength="69" lengthAdjust="spacingAndGlyphs">4.0µs</text><text x="1926.7" y="1181.5" font-size="29" stroke="#000" stroke-width="1.15" textLength="69" lengthAdjust="spacingAndGlyphs">4.5µs</text><text x="1280.2" y="103" font-size="27" fill="#22ee22" stroke="#22ee22" stroke-width="1.1" textLength="58.6" lengthAdjust="spacingAndGlyphs">V(c2)</text><text x="1580" y="103" font-size="27" fill="#1a1aff" stroke="#1a1aff" stroke-width="1.1" textLength="46.3" lengthAdjust="spacingAndGlyphs">V(b)</text><text x="1873.1" y="103" font-size="27" fill="#ff1122" stroke="#ff1122" stroke-width="1.1" textLength="46.4" lengthAdjust="spacingAndGlyphs">V(e)</text><path d="M1510.0,622.0 C1511.7,621.6 1514.8,622.1 1520.0,619.5 C1525.2,616.9 1534.2,609.0 1540.9,606.2 C1547.6,603.4 1551.8,603.3 1560.0,602.7 C1568.2,602.1 1581.8,602.3 1590.0,602.7 C1598.2,603.1 1601.8,603.9 1609.0,604.9 C1616.2,605.9 1625.3,608.0 1633.5,609.0 C1641.7,610.0 1638.6,610.8 1658.0,611.1 C1677.4,611.4 1684.5,611.1 1750.0,611.0 C1815.5,610.9 2000.8,610.4 2051.0,610.3 L2051.0,638.5 C2009.2,638.5 1843.5,638.3 1800.0,638.5 C1756.5,638.7 1815.5,639.4 1790.0,639.5 C1764.5,639.6 1673.5,639.5 1647.0,639.2 C1620.5,638.9 1637.1,638.4 1630.8,637.5 C1624.5,636.6 1617.2,635.1 1609.0,634.0 C1600.8,632.9 1593.0,632.2 1581.7,630.7 C1570.4,629.2 1552.9,626.6 1540.9,625.3 C1529.0,624.0 1515.2,623.4 1510.0,623.0 Z" fill="#ff1020"/><line x1="1167" y1="370.5" x2="1167" y2="1128.4" stroke="#ff1020" stroke-width="2"/><path d="M1167.0,615.0 C1167.2,632.5 1168.0,695.8 1168.5,720.0 C1169.0,744.2 1169.2,748.1 1170.0,760.0 C1170.8,771.9 1172.5,782.9 1173.5,791.4 C1174.5,799.9 1175.2,805.6 1176.0,811.0 C1176.8,816.4 1177.6,821.2 1178.3,824.0 C1179.0,826.8 1179.6,828.0 1180.3,828.0 C1181.0,828.0 1181.8,826.7 1182.5,824.0 C1183.2,821.3 1183.9,816.3 1184.6,812.0 C1185.3,807.7 1184.9,807.4 1186.8,798.0 C1188.7,788.6 1192.7,769.1 1195.7,755.8 C1198.7,742.5 1201.6,728.4 1204.6,718.0 C1207.6,707.6 1210.2,701.3 1213.5,693.5 C1216.8,685.7 1220.2,678.0 1224.7,671.3 C1229.2,664.6 1234.7,658.4 1240.2,653.4 C1245.8,648.4 1251.3,644.5 1258.0,641.2 C1264.7,637.9 1272.9,635.4 1280.3,633.4 C1287.7,631.4 1295.2,630.4 1302.6,629.4 C1310.0,628.4 1315.5,628.0 1324.8,627.2 C1334.1,626.4 1345.7,625.1 1358.2,624.5 C1370.7,623.9 1384.7,623.6 1400.0,623.3 C1415.3,623.0 1431.3,622.8 1450.0,622.6 C1468.7,622.4 1501.7,622.1 1512.0,622.0 " stroke="#ff1020" stroke-width="2" fill="none"/><path d="M1480.7,371.1 C1482.4,370.7 1486.7,370.1 1490.9,368.6 C1495.1,367.1 1501.9,365.4 1506.1,362.2 C1510.3,359.0 1512.9,356.7 1516.3,349.5 C1519.7,342.3 1523.5,328.3 1526.5,319.0 C1529.5,309.7 1531.5,302.8 1534.1,293.5 C1536.6,284.2 1539.2,272.3 1541.8,263.0 C1544.3,253.7 1546.9,245.6 1549.4,237.5 C1551.9,229.4 1554.0,222.2 1557.0,214.6 C1560.0,207.0 1563.4,199.0 1567.2,191.8 C1571.0,184.6 1575.7,177.4 1579.9,171.4 C1584.1,165.4 1587.9,161.2 1592.6,156.1 C1597.3,151.0 1601.7,145.5 1607.9,141.0 C1614.1,136.5 1622.9,132.0 1629.9,129.0 C1636.9,126.0 1641.9,124.6 1649.9,123.0 C1657.9,121.4 1665.6,120.4 1677.9,119.5 C1690.2,118.6 1703.5,117.9 1723.8,117.5 C1744.1,117.1 1745.5,117.2 1800.0,117.0 C1854.5,116.8 2009.2,116.6 2051.0,116.5 L2051.0,611.0 C2000.8,611.1 1815.5,611.5 1750.0,611.5 C1684.5,611.5 1677.9,611.9 1658.0,611.2 C1638.1,610.6 1639.0,609.3 1630.8,607.6 C1622.6,605.9 1615.8,605.1 1609.0,600.8 C1602.2,596.5 1595.9,589.0 1590.0,581.7 C1584.1,574.4 1578.1,564.2 1573.6,557.2 C1569.1,550.2 1566.2,546.4 1563.0,540.0 C1559.8,533.6 1557.7,528.9 1554.5,519.0 C1551.3,509.1 1547.2,494.1 1543.6,480.9 C1540.0,467.7 1536.0,451.7 1532.7,440.0 C1529.4,428.3 1526.7,418.7 1524.0,410.9 C1521.3,403.1 1518.8,398.1 1516.3,393.0 C1513.8,387.9 1511.4,383.3 1508.7,380.4 C1506.0,377.4 1504.7,376.9 1500.0,375.3 C1495.3,373.8 1483.9,371.8 1480.7,371.1 Z" fill="#2aff30"/><line x1="1167" y1="371" x2="1482" y2="371" stroke="#2aff30" stroke-width="2" /><path d="M1167.0,738.0 C1167.2,739.8 1167.2,749.5 1168.0,749.0 C1168.8,748.5 1170.3,741.3 1172.0,735.0 C1173.7,728.7 1176.0,722.1 1178.0,711.3 C1180.0,700.5 1181.9,686.1 1184.0,670.0 C1186.1,653.9 1188.4,628.5 1190.6,614.8 C1192.8,601.1 1194.7,595.7 1197.0,588.0 C1199.3,580.3 1201.0,576.5 1204.5,568.7 C1208.0,560.9 1212.9,549.1 1218.3,541.0 C1223.7,532.9 1229.1,526.4 1236.8,520.3 C1244.5,514.2 1253.7,508.4 1264.4,504.2 C1275.2,500.0 1285.9,497.1 1301.3,494.9 C1316.7,492.7 1331.8,491.6 1356.6,490.8 C1381.4,490.0 1418.6,490.4 1450.0,490.3 C1481.4,490.2 1529.2,490.2 1545.0,490.2 " stroke="#1515ff" stroke-width="2" fill="none"/><path d="M1543.6,489.0 C1548.1,489.9 1561.7,493.1 1570.8,494.5 C1579.9,495.9 1587.5,496.4 1598.0,497.2 C1608.5,498.0 1618.0,499.2 1633.5,499.4 C1649.0,499.6 1678.9,499.1 1690.7,498.6 C1702.5,498.2 1692.6,497.4 1704.4,496.7 C1716.2,496.0 1723.9,495.2 1761.6,494.5 C1799.3,493.8 1882.3,492.9 1930.5,492.6 C1978.7,492.3 2030.9,492.6 2051.0,492.6 L2051.0,498.6 C2026.4,498.7 1952.5,498.8 1903.3,499.4 C1854.1,500.0 1791.4,501.3 1756.0,502.1 C1720.6,502.9 1711.1,503.7 1690.7,504.0 C1670.3,504.3 1646.2,504.3 1633.5,504.0 C1620.8,503.7 1620.0,502.8 1614.4,502.1 C1608.8,501.4 1611.8,501.9 1600.0,500.0 C1588.2,498.1 1553.0,492.5 1543.6,491.0 Z" fill="#1515ff"/></g>
</svg>
<div class="a" style="left:669px;top:619px;width:521px;height:93px;background:#eeeeee;border:1px solid #c8c8c8;box-sizing:border-box;box-shadow:1px 3px 7px rgba(0,0,0,0.16)"></div>
<svg class="a" style="left:0;top:0" width="2202" height="1258" viewBox="0 0 2202 1258" font-family="Liberation Sans">
<text x="683" y="646" font-size="23" fill="#000" textLength="483.5" lengthAdjust="spacingAndGlyphs">Klick um das Bild zu schließen, klick und ziehe</text>
<text x="683" y="673.8" font-size="23" fill="#000" textLength="488.5" lengthAdjust="spacingAndGlyphs">um zu verschieben. Benutze Pfeiltasten für vor</text>
<text x="683" y="701.6" font-size="23" fill="#000" textLength="121" lengthAdjust="spacingAndGlyphs">und zurück.</text>
</svg>
</body></html>
